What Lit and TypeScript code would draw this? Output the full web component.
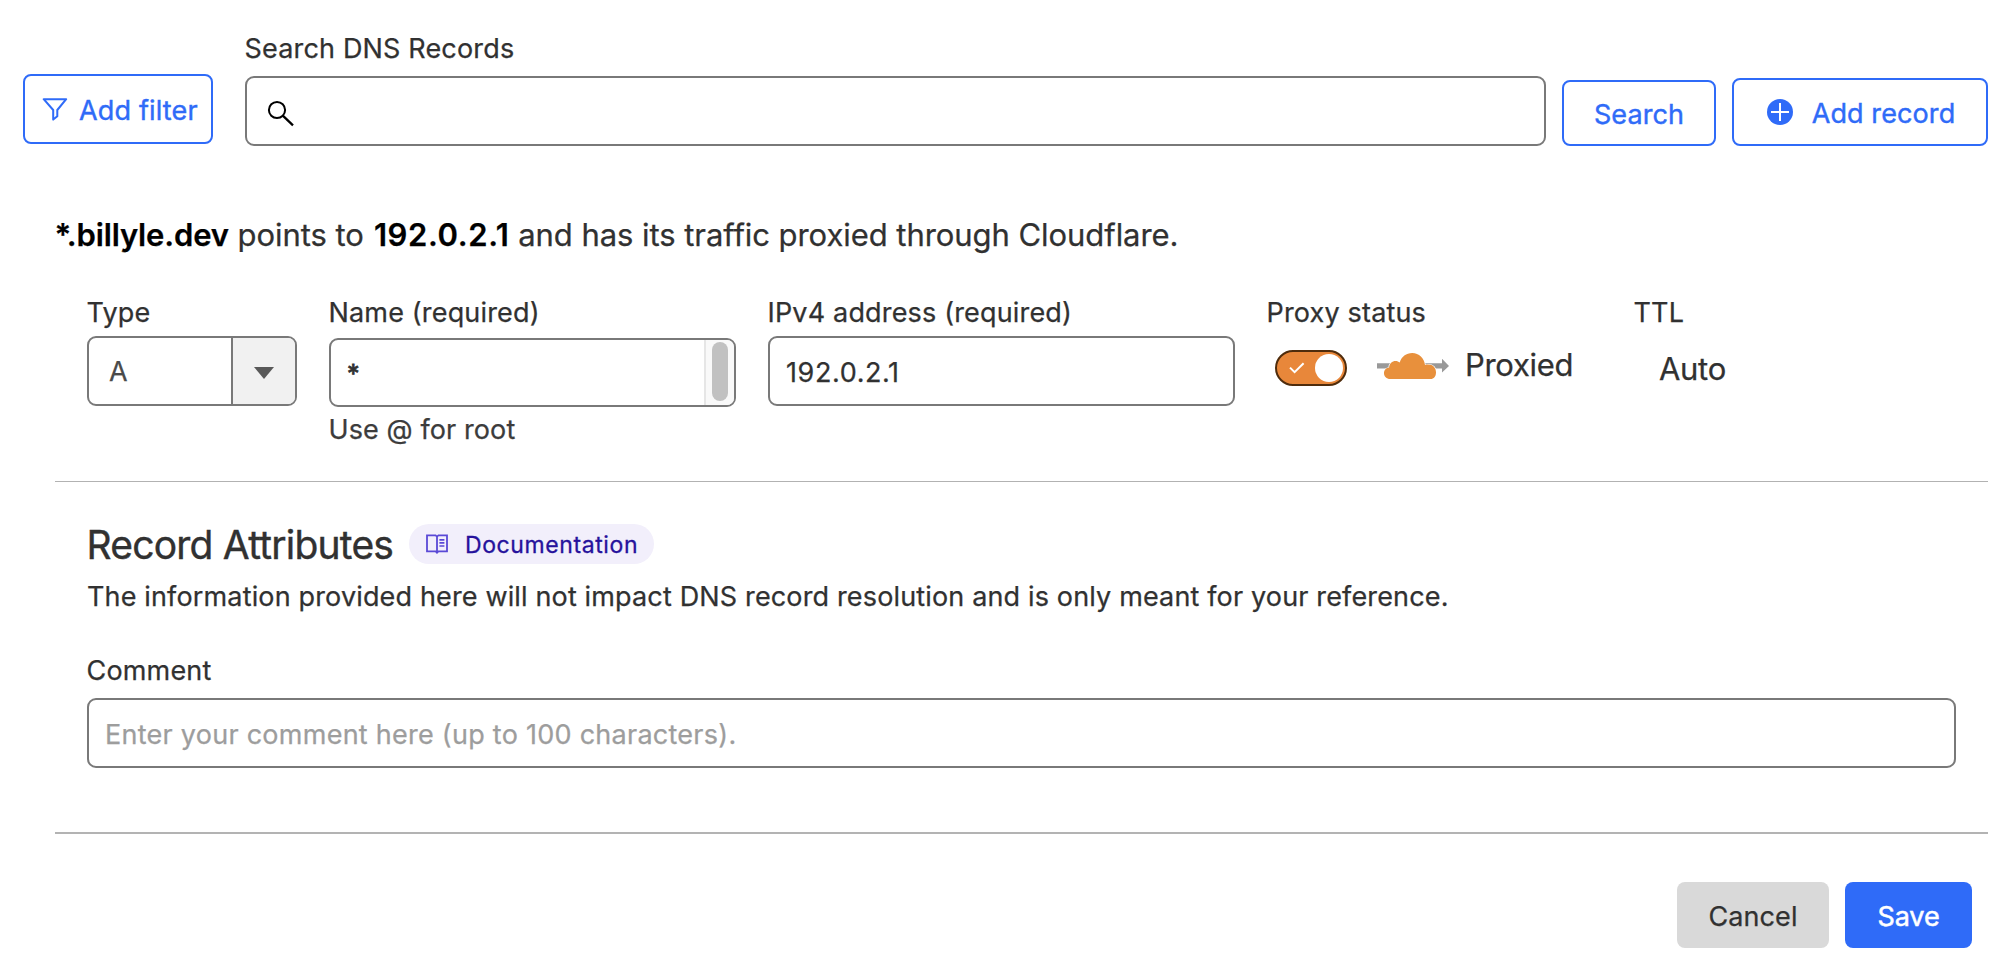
import { LitElement, html, css } from "lit";
import { customElement, property, state } from "lit/decorators.js";

const filterIcon = html`<svg class="filter" width="26" height="24" viewBox="0 0 26 24" fill="none">
  <path d="M1.7 2.2H24.2L15.3 13V19.2L11.2 22.6V13Z" stroke="currentColor" stroke-width="2" stroke-linejoin="round" />
</svg>`;

const searchIcon = html`<svg class="magnifier" width="28" height="28" viewBox="0 0 28 28" fill="none" stroke="#000">
  <circle cx="10" cy="10" r="8.1" stroke-width="2" />
  <path d="M15.8 15.6L26 25.4" stroke-width="2.3" />
</svg>`;

const plusIcon = html`<svg width="26" height="26" viewBox="0 0 26 26">
  <circle cx="13" cy="13" r="13" fill="currentColor" />
  <path d="M13 4V22M4 13H22" stroke="#fff" stroke-width="2" />
</svg>`;

const cloudIcon = html`<svg class="cloud" width="74" height="28" viewBox="0 0 74 28">
  <path d="M1 11.2H66V6.8L73 14L66 20.4V16.4H1Z" fill="#999" />
  <path
    d="M14.3 27C10.5 27 8 24.4 8 21.2C8 18.2 10.2 15.9 13.1 15.6C13.3 11.6 16.2 9 19.6 9C21.2 9 22.6 9.6 23.7 10.5C25.4 4.6 30.3 1 36.2 1C43 1 48.3 6 49 13.1C50.2 12.7 51.2 12.6 52.3 12.6C57 12.6 60 16 60 20.4C60 24.2 57.8 27 54.6 27Z"
    fill="#e8903c" stroke="#fff" stroke-width="1.4" paint-order="stroke"
  />
</svg>`;

const bookIcon = html`<svg width="22" height="20" viewBox="0 0 22 20" fill="none" stroke="#5a49d6">
  <path d="M1 1.4H9.6L11 2.6L12.4 1.4H21V17.4H12.4L11 18.7L9.6 17.4H1ZM11 2.6V18.7" stroke-width="1.8" />
  <path d="M13.4 5.8H18.4M13.4 8.9H18.4M13.4 12H18.4" stroke-width="1.7" />
</svg>`;

@customElement("dns-toggle")
class DnsToggle extends LitElement {
  @property({ type: Boolean }) on = false;
  static styles = css`
    :host { display: block; }
    .track {
      box-sizing: border-box;
      width: 72px;
      height: 36px;
      border: 2px solid #4f2c0c;
      border-radius: 18px;
      background: #e8873a;
      display: flex;
      align-items: center;
      justify-content: space-between;
      padding: 0 2px 0 12px;
    }
    .knob { width: 28px; height: 28px; border-radius: 50%; background: #fff; }
  `;
  render() {
    return html`<div class="track" role="switch" aria-checked=${this.on}>
      <svg width="16" height="12" viewBox="0 0 16 12" fill="none">
        <path d="M1 5.6L5.6 10.2L14.6 1.2" stroke="#fff" stroke-width="2" />
      </svg>
      <div class="knob"></div>
    </div>`;
  }
}

@customElement("app-root")
class AppRoot extends LitElement {
  @state() private recordName = "*";
  @state() private address = "192.0.2.1";

  static styles = css`
    :host {
      display: block;
      box-sizing: border-box;
      width: 2014px;
      height: 976px;
      overflow: hidden;
      background: #fff;
      color: #313131;
      font-family: Inter, "Liberation Sans", sans-serif;
      font-size: 27px;
      line-height: 32px;
      letter-spacing: 0.17px;
      white-space: nowrap;
      -webkit-text-stroke: 0.25px currentColor;
    }
    * { box-sizing: border-box; }
    svg { display: block; flex: none; }
    .label { line-height: 34px; text-indent: -0.5px; }

    .toolbar { display: flex; align-items: flex-end; gap: 16px; padding: 32px 26px 0 23px; }
    .btn {
      display: flex;
      align-items: center;
      justify-content: center;
      flex: none;
      height: 66px;
      padding: 3px 0 0;
      border: 0;
      border-radius: 8px;
      font: inherit;
      letter-spacing: 0.1px;
      color: #313131;
      background: #d9d9d9;
    }
    .outline {
      border: 2px solid #2f6bf8;
      padding-top: 0;
      background: #fff;
      color: #2f6bf8;
      -webkit-text-stroke: 0.4px #2f6bf8;
    }
    .outline span { padding-top: 4px; }
    .add-filter { width: 190px; height: 70px; margin: 0 16px 2px 0; gap: 11px; letter-spacing: 0.15px; justify-content: flex-start; padding-left: 17px; }
    .search-field { flex: 1; }
    .search { width: 154px; }
    .add-record { width: 256px; height: 68px; gap: 19px; padding-left: 2px; }

    .box {
      display: flex;
      align-items: center;
      width: 100%;
      height: 70px;
      margin: 6px 0 0;
      padding: 2px 16px 0;
      border: 2px solid #797979;
      border-radius: 9px;
      background: #fff;
      color: #313131;
      font: inherit;
      letter-spacing: inherit;
      outline: none;
    }
    .search-field .box, .comment .box { margin-top: 10px; }
    .search-field .box { padding: 6px 20px 0; }
    .search-field input { border: 0; outline: 0; flex: 1; min-width: 0; }
    .box::placeholder { color: #9d9d9d; opacity: 1; }

    .panel { margin: 0 26px 0 55px; padding-top: 69px; }
    .summary { margin: 0; font-size: 31px; line-height: 40px; font-weight: 400; letter-spacing: -0.06px; text-indent: -0.5px; }
    .summary b { font-weight: 600; color: #000; letter-spacing: -0.15px; }
    .summary .ip { letter-spacing: 0.6px; margin-left: 1.5px; }
    .fields { display: flex; gap: 32px; height: 186px; margin-top: 41px; padding-left: 32px; border-bottom: 1px solid #b2b2b2; }
    .type { width: 210px; }
    .select { padding: 0; overflow: hidden; }
    .select .value { flex: 1; padding: 2px 0 0 20px; color: #4a4a4a; }
    .select .arrow {
      display: flex;
      align-items: center;
      justify-content: center;
      width: 64px;
      height: 100%;
      padding-top: 4px;
      border-left: 2px solid #797979;
      background: #f1f1f1;
    }
    .name { width: 407px; }
    .name .box { height: 69px; margin-top: 8px; padding: 0; overflow: hidden; justify-content: space-between; }
    .name .value { padding: 2px 0 0 16px; font-size: 25px; -webkit-text-stroke: 0.8px currentColor; }
    .scroll { width: 30px; height: 100%; border-left: 2px solid #e6e6e6; background: #f9f9f9; padding: 2px 0 0 6px; }
    .thumb { width: 16px; height: 59px; border-radius: 8px; background: #c1c1c1; }
    .hint { margin-top: 7px; color: #3c3c3c; letter-spacing: 0.1px; text-indent: -0.5px; }
    .ipv4 { width: 467px; }
    .ipv4 .box { letter-spacing: 0.6px; }
    .proxy { width: 335px; }
    .status { display: flex; align-items: flex-start; padding: 16px 0 0 8px; font-size: 31px; letter-spacing: -0.3px; }
    .status dns-toggle { margin-top: 4px; }
    .status .cloud { margin: 6px 15px 0 29px; }
    .status span { padding-top: 3px; }
    .ttl { text-indent: -1px; }
    .ttl .auto { padding: 23px 0 0 26px; font-size: 31px; letter-spacing: -0.3px; }

    .attributes { padding: 42px 32px 0; }
    .title { display: flex; align-items: flex-start; height: 40px; gap: 16px; }
    .title h2 { margin: 0; width: 306px; font-size: 39px; line-height: 42px; font-weight: 400; letter-spacing: -0.78px; text-indent: -0.5px; -webkit-text-stroke: 0.4px #313131; }
    .pill {
      display: flex;
      align-items: center;
      gap: 17px;
      width: 245px;
      height: 40px;
      padding: 0 0 0 17px;
      border-radius: 20px;
      background: #f2effb;
      color: #26129c;
      font-size: 23px;
      letter-spacing: 0.6px;
      -webkit-text-stroke: 0.3px #26129c;
    }
    .pill span { padding-top: 1px; }
    .info { margin: 17px 0 41px; letter-spacing: 0.15px; }
    .comment .box { letter-spacing: 0.26px; }
    .actions { display: flex; justify-content: flex-end; gap: 16px; margin-top: 64px; padding: 48px 16px 0 0; border-top: 2px solid #b3b3b3; }
    .cancel { width: 152px; }
    .save { width: 127px; background: #2f6bf8; color: #fff; -webkit-text-stroke: 0.5px #fff; letter-spacing: -0.1px; }
  `;

  render() {
    return html`
      <div class="toolbar">
        <button class="btn outline add-filter">${filterIcon}<span>Add filter</span></button>
        <div class="search-field">
          <div class="label">Search DNS Records</div>
          <div class="box">${searchIcon}<input aria-label="Search" /></div>
        </div>
        <button class="btn outline search"><span>Search</span></button>
        <button class="btn outline add-record">${plusIcon}<span>Add record</span></button>
      </div>

      <div class="panel">
        <p class="summary">
          <b>${this.recordName}.billyle.dev</b> points to <b class="ip">${this.address}</b> and has its
          traffic proxied through Cloudflare.
        </p>
        <div class="fields">
          <div class="type">
            <div class="label">Type</div>
            <div class="box select">
              <span class="value">A</span>
              <span class="arrow">
                <svg width="20" height="12" viewBox="0 0 20 12"><path d="M0 0H20L10 12Z" fill="#595959" /></svg>
              </span>
            </div>
          </div>
          <div class="name">
            <div class="label">Name (required)</div>
            <div class="box">
              <span class="value">${this.recordName}</span>
              <div class="scroll"><div class="thumb"></div></div>
            </div>
            <div class="hint">Use @ for root</div>
          </div>
          <div class="ipv4">
            <div class="label">IPv4 address (required)</div>
            <input class="box" .value=${this.address} />
          </div>
          <div class="proxy">
            <div class="label">Proxy status</div>
            <div class="status"><dns-toggle on></dns-toggle>${cloudIcon}<span>Proxied</span></div>
          </div>
          <div class="ttl">
            <div class="label">TTL</div>
            <div class="auto">Auto</div>
          </div>
        </div>

        <div class="attributes">
          <div class="title">
            <h2>Record Attributes</h2>
            <a class="pill">${bookIcon}<span>Documentation</span></a>
          </div>
          <p class="info">
            The information provided here will not impact DNS record resolution and is only meant for your reference.
          </p>
          <div class="comment">
            <div class="label">Comment</div>
            <input class="box" placeholder="Enter your comment here (up to 100 characters)." />
          </div>
        </div>

        <div class="actions">
          <button class="btn cancel">Cancel</button>
          <button class="btn save">Save</button>
        </div>
      </div>
    `;
  }
}
